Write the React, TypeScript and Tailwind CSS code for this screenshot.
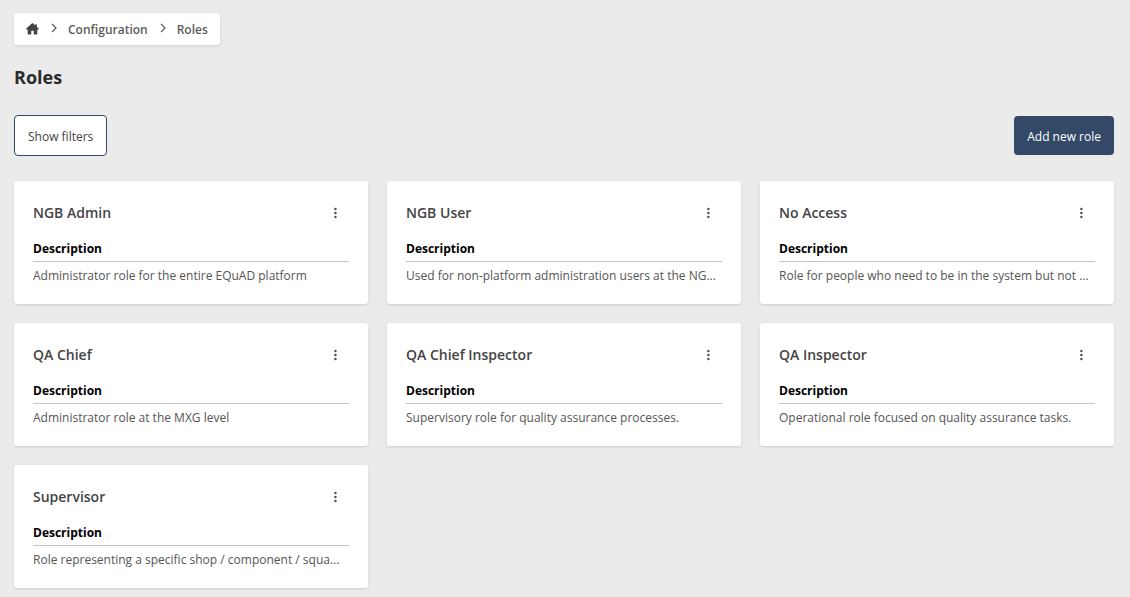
import React from "react";

type Role = {
  name: string;
  description: string;
};

const roles: Role[] = [
  {
    name: "NGB Admin",
    description: "Administrator role for the entire EQuAD platform",
  },
  {
    name: "NGB User",
    description: "Used for non-platform administration users at the NG...",
  },
  {
    name: "No Access",
    description: "Role for people who need to be in the system but not ...",
  },
  { name: "QA Chief", description: "Administrator role at the MXG level" },
  {
    name: "QA Chief Inspector",
    description: "Supervisory role for quality assurance processes.",
  },
  {
    name: "QA Inspector",
    description: "Operational role focused on quality assurance tasks.",
  },
  {
    name: "Supervisor",
    description: "Role representing a specific shop / component / squa...",
  },
];

function Chevron() {
  return (
    <svg
      className="w-1.5 h-2.5 mb-0.5"
      viewBox="0 0 6 10"
      fill="none"
      stroke="currentColor"
      aria-hidden="true"
    >
      <path strokeWidth={1.2} d="M1 1l4 4-4 4" />
    </svg>
  );
}

function Breadcrumbs() {
  return (
    <nav aria-label="Breadcrumb" className="flex">
      <ol className="flex items-center h-8 px-3 bg-white rounded-[3px] shadow-sm text-xs font-semibold text-[#5c5c5c]">
        <li>
          <a href="#home" aria-label="Home" className="block text-[#444444]">
            <svg className="w-[13px] h-3" viewBox="0 0 13 12" fill="currentColor">
              <path d="M6.5.2c-.3 0-.5.1-.7.3L.3 5.6c-.4.4-.2 1 .4 1h1v4c0 .6.4 1 1 1h2.5V8.3c0-.3.2-.5.5-.5h1.6c.3 0 .5.2.5.5v3.3h2.5c.6 0 1-.4 1-1v-4h1c.6 0 .8-.6.4-1l-1.8-1.7V1.3H9.4v1.2L7.2.5C7 .3 6.800.2 6.500.2z" />
            </svg>
          </a>
        </li>
        <li className="flex items-center gap-[11px] ml-3">
          <Chevron />
          <a href="#configuration" className="pt-0.5">
            Configuration
          </a>
        </li>
        <li className="flex items-center gap-[11px] ml-3">
          <Chevron />
          <a href="#roles" aria-current="page" className="pt-0.5">
            Roles
          </a>
        </li>
      </ol>
    </nav>
  );
}

function RoleCard({ role }: { role: Role }) {
  return (
    <article className="min-w-0 p-[19px] bg-white rounded-[3px] shadow-sm">
      <div className="flex items-center justify-between h-[26px]">
        <h2 className="text-sm font-semibold text-[#444444]">{role.name}</h2>
        <button
          type="button"
          aria-label={`Options for ${role.name}`}
          className="flex items-center justify-center w-7 h-6 text-[#555555]"
        >
          <svg className="w-1 h-3" viewBox="0 0 4 12" fill="currentColor">
            <circle cx="2.4" cy="2" r="1.3" />
            <circle cx="2.4" cy="6" r="1.3" />
            <circle cx="2.4" cy="10" r="1.3" />
          </svg>
        </button>
      </div>
      <h3 className="mt-[13px] pb-0.5 border-b border-[#c4c4c4] text-xs leading-5 font-bold text-black">
        Description
      </h3>
      <p className="mt-1 -mb-px text-xs leading-5 text-[#555555] truncate">
        {role.description}
      </p>
    </article>
  );
}

export default function App() {
  return (
    <main className="min-h-screen pt-[13px] pb-2.5 pl-3.5 pr-4 bg-[#ebebeb] font-['Segoe_UI','Open_Sans',sans-serif]">
      <Breadcrumbs />
      <h1 className="mt-5 text-lg leading-6 font-bold text-[#2b2b2b]">Roles</h1>

      {/* Actions */}
      <div className="flex items-center justify-between mt-[26px] text-xs">
        <button
          type="button"
          className="h-[41px] px-[13px] pt-0.5 bg-white border border-[#34466a] rounded text-[#444444]"
        >
          Show filters
        </button>
        <button
          type="button"
          className="h-[39px] px-[13px] pt-0.5 bg-[#344868] rounded text-white"
        >
          Add new role
        </button>
      </div>

      {/* Role cards */}
      <div className="grid grid-cols-3 gap-[19px] mt-[25px]">
        {roles.map((role) => (
          <RoleCard role={role} key={role.name} />
        ))}
      </div>
    </main>
  );
}
